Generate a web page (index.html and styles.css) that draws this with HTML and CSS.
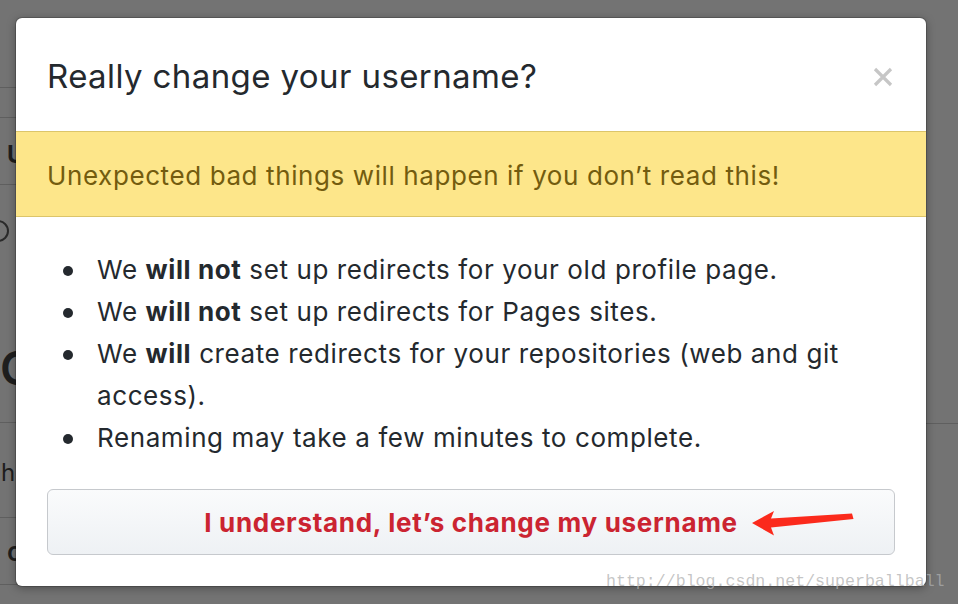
FILE: index.html
```html
<!DOCTYPE html>
<html lang="en">
<head>
<meta charset="utf-8">
<title>Really change your username?</title>
<link rel="stylesheet" href="styles.css">
</head>
<body>
<div class="page">
  <div class="col-left">
    <div class="row r1"></div>
    <div class="row r2"></div>
    <div class="row r3"><span class="frag-u">U</span></div>
    <div class="row r4"><span class="frag-o"></span><span class="frag-c">C</span></div>
    <div class="row r5"><span class="frag-h">h</span></div>
    <div class="row r6"><span class="frag-c2">c</span></div>
  </div>
  <div class="col-right">
    <div class="row rr1"></div>
  </div>
</div>

<div class="modal">
  <div class="modal-header">
    <h2 class="modal-title">Really change your username?</h2>
    <svg class="close" width="20" height="20" viewBox="0 0 20 20" aria-label="Close">
      <path d="M2 2 L18 18 M18 2 L2 18" stroke="#c6c6c6" stroke-width="3.2" stroke-linecap="butt"/>
    </svg>
  </div>
  <div class="flash">Unexpected bad things will happen if you don’t read this!</div>
  <div class="modal-body">
    <ul class="notes">
      <li>We <strong>will not</strong> set up redirects for your old profile page.</li>
      <li>We <strong>will not</strong> set up redirects for Pages sites.</li>
      <li>We <strong>will</strong> create redirects for your repositories (web and git access).</li>
      <li>Renaming may take a few minutes to complete.</li>
    </ul>
    <button class="btn-danger" type="button">I understand, let’s change my username</button>
  </div>
</div>

<svg class="arrow" width="110" height="30" viewBox="745 508 110 30">
  <polygon points="752,523 774,511 771,518.5 852,513.5 853.5,519 771,527.5 774,535.5" fill="#fb2a1c"/>
</svg>

<div class="watermark">http://blog.csdn.net/superballball</div>
</body>
</html>
```

FILE: styles.css
```css
* { box-sizing: border-box; }

html, body {
  margin: 0;
  padding: 0;
}

body {
  width: 958px;
  height: 604px;
  overflow: hidden;
  background: #737373;
  font-family: Inter, "Liberation Sans", sans-serif;
  color: #24292e;
  position: relative;
}

/* dimmed page behind the dialog */
.page {
  display: flex;
  height: 604px;
}
.col-left {
  width: 520px;
  display: flex;
  flex-direction: column;
}
.col-right {
  flex: 1;
  display: flex;
  flex-direction: column;
}
.row {
  border-bottom: 1px solid #5f5f5f;
  position: relative;
  overflow: hidden;
}
.r1 { height: 88px; }
.r2 { height: 30px; }
.r3 { height: 67px; }
.r4 { height: 238px; }
.r5 { height: 95px; }
.r6 { height: 67px; }
.rr1 { height: 424px; }

.frag-u {
  position: absolute;
  left: 7px;
  top: 22px;
  font-weight: 700;
  font-size: 24px;
  color: #1e1e1e;
}
.frag-o {
  position: absolute;
  left: -13px;
  top: 35px;
  width: 22px;
  height: 22px;
  border: 2px solid #2a2a2a;
  border-radius: 50%;
}
.frag-c {
  position: absolute;
  left: 0;
  top: 155px;
  font-size: 46px;
  font-weight: 600;
  color: #1e1e1e;
}
.frag-h {
  position: absolute;
  left: 1px;
  top: 35px;
  font-size: 24px;
  color: #1e1e1e;
}
.frag-c2 {
  position: absolute;
  left: 7px;
  top: 18px;
  font-size: 26px;
  font-weight: 600;
  color: #1e1e1e;
}

/* dialog */
.modal {
  position: absolute;
  left: 16px;
  top: 18px;
  width: 910px;
  height: 568px;
  background: #fff;
  border-radius: 6px;
  box-shadow: 0 0 0 1px rgba(0,0,0,0.18), 0 2px 10px rgba(0,0,0,0.35);
  overflow: hidden;
}

.modal-header {
  height: 113px;
  padding: 0 33px 0 31px;
  display: flex;
  align-items: center;
  justify-content: space-between;
}
.modal-title {
  margin: 0;
  font-size: 33px;
  font-weight: 400;
  color: #24292e;
  letter-spacing: 0.4px;
  position: relative;
  top: 1px;
}
.close {
  display: block;
  position: relative;
  top: 2px;
}

.flash {
  height: 86px;
  background: #fde68a;
  border-top: 1px solid #dcc56a;
  border-bottom: 1px solid #dcc56a;
  color: #735c0f;
  font-size: 26px;
  letter-spacing: 0.6px;
  padding: 2px 31px 0;
  display: flex;
  align-items: center;
}

.modal-body {
  padding: 32px 31px 31px;
}

.notes {
  margin: 0;
  padding: 0 0 0 50px;
  list-style: none;
  font-size: 26px;
  line-height: 42px;
  letter-spacing: 0.6px;
  color: #24292e;
}
.notes li {
  position: relative;
}
.notes li::before {
  content: "";
  position: absolute;
  left: -34px;
  top: 17px;
  width: 10px;
  height: 10px;
  border-radius: 50%;
  background: #24292e;
}
.notes strong {
  font-weight: 700;
}

.btn-danger {
  display: block;
  width: 100%;
  height: 66px;
  margin-top: 30px;
  border: 1px solid #c6c9cd;
  border-radius: 6px;
  background: linear-gradient(#fafbfc, #eef1f4);
  color: #cb2431;
  font-family: Inter, "Liberation Sans", sans-serif;
  font-size: 26px;
  font-weight: 700;
  letter-spacing: 0.7px;
  cursor: pointer;
}

/* annotation and watermark overlays */
.arrow {
  position: absolute;
  left: 745px;
  top: 508px;
}
.watermark {
  position: absolute;
  left: 606px;
  top: 572px;
  font-family: "Liberation Mono", monospace;
  font-size: 16.6px;
  color: rgba(175,175,175,0.72);
  white-space: nowrap;
}
```
